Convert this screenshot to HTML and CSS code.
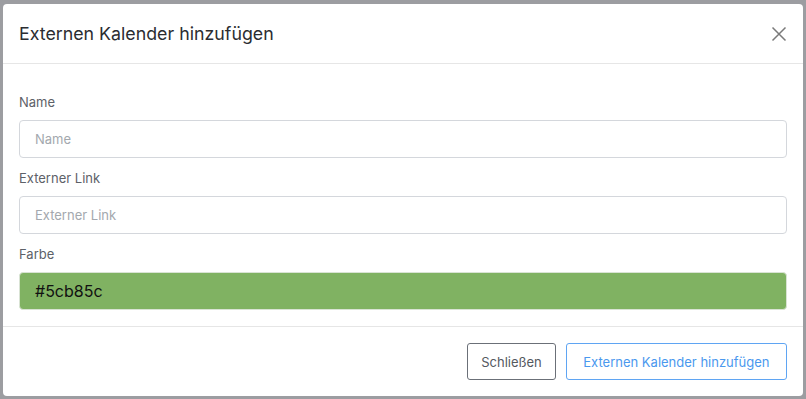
FILE: index.html
```html
<!DOCTYPE html>
<html lang="de">
<head>
  <meta charset="UTF-8">
  <title>Externen Kalender hinzufügen</title>
  <link rel="stylesheet" href="styles.css">
</head>
<body>
  <div class="backdrop">
    <div class="modal">
      <div class="modal-header">
        <h2 class="modal-title">Externen Kalender hinzufügen</h2>
        <button class="close" aria-label="Schließen">
          <svg width="16" height="16" viewBox="0 0 16 16">
            <path d="M1.5 1.5 L14.5 14.5 M14.5 1.5 L1.5 14.5" stroke="#7a7a7a" stroke-width="1.5" fill="none"/>
          </svg>
        </button>
      </div>
      <div class="modal-body">
        <div class="form-group">
          <label for="name">Name</label>
          <input id="name" class="form-control" type="text" placeholder="Name">
        </div>
        <div class="form-group">
          <label for="link">Externer Link</label>
          <input id="link" class="form-control" type="text" placeholder="Externer Link">
        </div>
        <div class="form-group">
          <label for="farbe">Farbe</label>
          <input id="farbe" class="form-control color" type="text" value="#5cb85c">
        </div>
      </div>
      <div class="modal-footer">
        <button class="btn btn-secondary">Schließen</button>
        <button class="btn btn-primary">Externen Kalender hinzufügen</button>
      </div>
    </div>
  </div>
</body>
</html>
```

FILE: styles.css
```css
html, body {
  margin: 0;
  height: 100%;
}
body {
  font-family: Inter, "Open Sans", sans-serif;
  background: #9c9da1;
  color: #333;
}
.backdrop {
  padding: 4px 3px 3px 3px;
  height: 100%;
  box-sizing: border-box;
}
.modal {
  background: #fff;
  border-radius: 4px;
  height: 392px;
  display: flex;
  flex-direction: column;
}
.modal-header {
  display: flex;
  align-items: center;
  justify-content: space-between;
  height: 59px;
  padding: 0 16px;
  border-bottom: 1px solid #e6e6e6;
}
.modal-title {
  margin: 0;
  font-size: 17.8px;
  font-weight: 400;
  color: #2b2d31;
}
.close {
  border: none;
  background: none;
  padding: 0;
  width: 16px;
  height: 16px;
  cursor: pointer;
}
.modal-body {
  padding: 28px 16px 16px 16px;
  border-bottom: 1px solid #e6e6e6;
}
.form-group + .form-group {
  margin-top: 10px;
}
label {
  display: block;
  font-size: 13px;
  line-height: 21px;
  color: #5d6168;
  margin-bottom: 7px;
}
.form-control {
  display: block;
  width: 100%;
  box-sizing: border-box;
  height: 38px;
  padding: 0 15px;
  font-family: inherit;
  font-size: 13px;
  color: #222;
  border: 1px solid #d4d7dc;
  border-radius: 4px;
  background: #fff;
}
.form-control::placeholder {
  color: #a3a8ae;
}
.form-control.color {
  background: #80b262;
  border-color: #d9e3d4;
  color: #111;
  font-size: 16px;
}
.modal-footer {
  display: flex;
  justify-content: flex-end;
  gap: 10px;
  padding: 16px;
}
.btn {
  height: 37px;
  font-family: inherit;
  font-size: 13px;
  background: #fff;
  border-radius: 3px;
  cursor: pointer;
}
.btn-secondary {
  padding: 0 13px;
  border: 1px solid #6b7078;
  color: #55595f;
}
.btn-primary {
  padding: 0 16.5px;
  border: 1px solid #5fa5f3;
  color: #4a98ee;
}
```
